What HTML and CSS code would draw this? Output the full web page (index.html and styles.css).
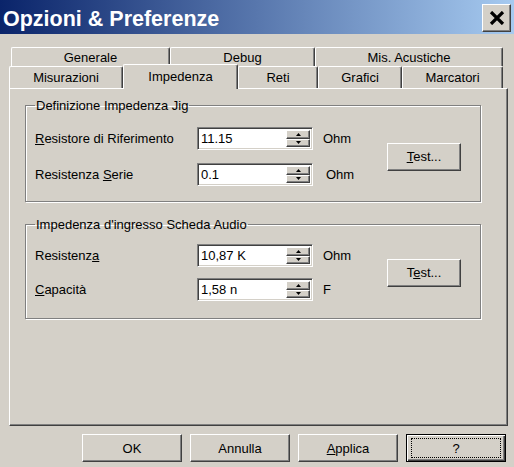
FILE: index.html
```html
<!DOCTYPE html>
<html lang="it">
<head>
    <meta charset="UTF-8">
    <title>Opzioni &amp; Preferenze</title>
    <link rel="stylesheet" href="styles.css">
</head>
<body>
    <div class="window">
        <div class="titlebar">
            <span class="title">Opzioni &amp; Preferenze</span>
            <button class="close-btn">
                <svg width="16" height="14" viewBox="0 0 16 14">
                    <path d="M2 1 L14 13 M14 1 L2 13" stroke="#000" stroke-width="3.2" fill="none"/>
                </svg>
            </button>
        </div>

        <div class="content">
            <div class="tabs">
                <div class="tab-row back">
                    <div class="tab tab-generale">Generale</div>
                    <div class="tab tab-debug">Debug</div>
                    <div class="tab tab-acustiche">Mis. Acustiche</div>
                </div>
                <div class="tab-row front">
                    <div class="tab tab-misurazioni">Misurazioni</div>
                    <div class="tab tab-impedenza active">Impedenza</div>
                    <div class="tab tab-reti">Reti</div>
                    <div class="tab tab-grafici">Grafici</div>
                    <div class="tab tab-marcatori">Marcatori</div>
                </div>
            </div>

            <div class="panel">
                <fieldset class="group group-jig">
                    <legend>Definizione Impedenza Jig</legend>
                    <div class="group-grid">
                        <label class="field-label"><u>R</u>esistore di Riferimento</label>
                        <div class="spin-field">
                            <span class="spin-value">11.15</span>
                            <div class="spin">
                                <span class="spin-btn"><svg width="5" height="3" viewBox="0 0 5 3"><polygon points="2.5,0 5,3 0,3" fill="#000"/></svg></span>
                                <span class="spin-btn"><svg width="5" height="3" viewBox="0 0 5 3"><polygon points="0,0 5,0 2.5,3" fill="#000"/></svg></span>
                            </div>
                        </div>
                        <span class="unit">Ohm</span>
                        <button class="btn test-btn"><u>T</u>est...</button>

                        <label class="field-label">Resistenza <u>S</u>erie</label>
                        <div class="spin-field">
                            <span class="spin-value">0.1</span>
                            <div class="spin">
                                <span class="spin-btn"><svg width="5" height="3" viewBox="0 0 5 3"><polygon points="2.5,0 5,3 0,3" fill="#000"/></svg></span>
                                <span class="spin-btn"><svg width="5" height="3" viewBox="0 0 5 3"><polygon points="0,0 5,0 2.5,3" fill="#000"/></svg></span>
                            </div>
                        </div>
                        <span class="unit unit-shift">Ohm</span>
                    </div>
                </fieldset>

                <fieldset class="group group-audio">
                    <legend>Impedenza d'ingresso Scheda Audio</legend>
                    <div class="group-grid">
                        <label class="field-label">Resistenz<u>a</u></label>
                        <div class="spin-field">
                            <span class="spin-value">10,87 K</span>
                            <div class="spin">
                                <span class="spin-btn"><svg width="5" height="3" viewBox="0 0 5 3"><polygon points="2.5,0 5,3 0,3" fill="#000"/></svg></span>
                                <span class="spin-btn"><svg width="5" height="3" viewBox="0 0 5 3"><polygon points="0,0 5,0 2.5,3" fill="#000"/></svg></span>
                            </div>
                        </div>
                        <span class="unit">Ohm</span>
                        <button class="btn test-btn">T<u>e</u>st...</button>

                        <label class="field-label"><u>C</u>apacità</label>
                        <div class="spin-field">
                            <span class="spin-value">1,58 n</span>
                            <div class="spin">
                                <span class="spin-btn"><svg width="5" height="3" viewBox="0 0 5 3"><polygon points="2.5,0 5,3 0,3" fill="#000"/></svg></span>
                                <span class="spin-btn"><svg width="5" height="3" viewBox="0 0 5 3"><polygon points="0,0 5,0 2.5,3" fill="#000"/></svg></span>
                            </div>
                        </div>
                        <span class="unit">F</span>
                    </div>
                </fieldset>
            </div>

            <div class="actions">
                <button class="btn action-btn">OK</button>
                <button class="btn action-btn">Annulla</button>
                <button class="btn action-btn"><u>A</u>pplica</button>
                <button class="btn action-btn default-btn">?</button>
            </div>
        </div>
    </div>
</body>
</html>
```

FILE: styles.css
```css
body {
    margin: 0;
    background: #d4d0c8;
    font-family: 'Liberation Sans', Arial, sans-serif;
    font-size: 13px;
    color: #000;
}

.window {
    width: 514px;
    height: 467px;
    overflow: hidden;
}

/* title bar */
.titlebar {
    height: 34px;
    display: flex;
    align-items: center;
    justify-content: space-between;
    background: linear-gradient(to right, #0a246a, #a6caf0);
}

.title {
    color: #fff;
    font-weight: bold;
    font-size: 21.5px;
    padding-left: 3px;
    padding-top: 5px;
}

.close-btn {
    width: 29px;
    height: 28px;
    margin-right: 3px;
    margin-top: 2px;
    padding: 0;
    display: flex;
    align-items: center;
    justify-content: center;
    background: #d4d0c8;
    border: 1px solid;
    border-color: #fff #404040 #404040 #fff;
    box-shadow: inset -1px -1px #808080;
}

/* tabs */
.content {
    padding: 13px 6px 0 9px;
}

.tab-row {
    display: flex;
}

.tab-row.back {
    height: 19px;
    margin-left: 2px;
}

.tab-row.front {
    height: 22px;
    position: relative;
    z-index: 1;
}

.tab {
    box-sizing: border-box;
    display: flex;
    justify-content: center;
    align-items: center;
    background: #d4d0c8;
    border-top: 1px solid #fff;
    border-left: 1px solid #fff;
    border-right: 1px solid #404040;
    box-shadow: inset -1px 0 #808080;
    border-radius: 2px 2px 0 0;
}

.tab-generale { width: 159px; }
.tab-debug { width: 145px; }
.tab-acustiche { width: 188px; }
.tab-misurazioni { width: 114px; }
.tab-impedenza { width: 115px; }
.tab-reti { width: 80px; }
.tab-grafici { width: 84px; }
.tab-marcatori { width: 101px; }

.tab.active {
    height: 25px;
    margin-top: -2px;
    align-items: flex-start;
    padding-top: 4px;
}

/* panel */
.panel {
    box-sizing: border-box;
    height: 338px;
    padding: 9px 26px 0 15px;
    border: 1px solid;
    border-color: #fff #404040 #404040 #fff;
    box-shadow: inset -1px -1px #808080;
}

.group {
    margin: 0;
    padding: 14px 0 15px 9px;
    border: 1px solid #808080;
    box-shadow: inset 1px 1px #fff, 1px 1px #fff;
}

.group legend {
    padding: 0 1px;
    line-height: 15px;
}

.group-audio {
    margin-top: 15px;
    padding-top: 12px;
    padding-bottom: 17px;
}

.group-grid {
    display: grid;
    grid-template-columns: 162px 116px 74px 74px;
    grid-template-rows: 23px 23px;
    row-gap: 13px;
    align-items: center;
}

.group-audio .group-grid {
    row-gap: 11px;
}

.field-label {
    white-space: nowrap;
}

/* spin edit */
.spin-field {
    box-sizing: border-box;
    height: 23px;
    display: flex;
    background: #fff;
    border: 1px solid;
    border-color: #808080 #fff #fff #808080;
    box-shadow: inset 1px 1px #404040, inset -1px -1px #d4d0c8;
    padding: 2px;
}

.spin-value {
    flex: 1;
    padding-left: 1px;
    line-height: 17px;
}

.spin {
    width: 24px;
    display: flex;
    flex-direction: column;
}

.spin-btn {
    box-sizing: border-box;
    flex: 1;
    display: flex;
    align-items: center;
    justify-content: center;
    background: #d4d0c8;
    border: 1px solid;
    border-color: #fff #404040 #404040 #fff;
    box-shadow: inset -1px -1px #808080;
}

.spin-btn svg {
    display: block;
}

.unit {
    padding-left: 10px;
}

.unit-shift {
    padding-left: 13px;
}

/* buttons */
.btn {
    box-sizing: border-box;
    font-family: inherit;
    font-size: 13px;
    color: #000;
    background: #d4d0c8;
    border: 1px solid;
    border-color: #fff #404040 #404040 #fff;
    box-shadow: inset -1px -1px #808080;
    padding: 0;
}

.test-btn {
    grid-column: 4;
    grid-row: 1 / 3;
    width: 74px;
    height: 28px;
}

.actions {
    display: flex;
    justify-content: flex-end;
    gap: 8px;
    padding: 8px 2px 0 0;
}

.action-btn {
    width: 100px;
    height: 28px;
}

.default-btn {
    position: relative;
    border-color: #000;
    box-shadow: inset 1px 1px #fff, inset -1px -1px #404040, inset -2px -2px #808080;
}

.default-btn::after {
    content: '';
    position: absolute;
    top: 3px;
    left: 4px;
    right: 4px;
    bottom: 3px;
    border: 1px dotted #000;
}
```
